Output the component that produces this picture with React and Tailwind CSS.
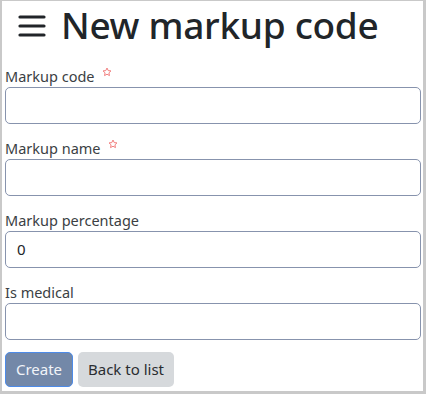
const fields = [
  { label: "Markup code", required: true, value: "" },
  { label: "Markup name", required: true, value: "" },
  { label: "Markup percentage", required: false, value: "0" },
  { label: "Is medical", required: false, value: "" },
];

function Star() {
  return (
    <svg width="10" height="10" viewBox="0 0 24 24" className="ml-[7px] -mt-[10px]">
      <path
        d="M12 2.5l2.9 6.1 6.6.8-4.9 4.6 1.3 6.6L12 17.3l-5.9 3.3 1.3-6.6-4.9-4.6 6.6-.8z"
        fill="none"
        stroke="#f07a7a"
        strokeWidth="2.3"
        strokeLinejoin="round"
      />
    </svg>
  );
}

function App() {
  return (
    <div
      className="w-[426px] h-[394px] bg-white border-[#c9c9c9] border-t-[1px] border-l-[2px] border-r-[3px] border-b-[3px] overflow-hidden text-[#212529]"
      style={{ fontFamily: '"Noto Sans", "Open Sans", sans-serif' }}
    >
      {/* Header */}
      <div className="flex items-center h-[45px] pl-[15px] pt-[2px]">
        <svg width="30" height="24" viewBox="0 0 30 24" className="mr-[14px] mt-[1px]">
          <path d="M3 4h24M3 13h24M3 22h24" stroke="#212529" strokeWidth="3.2" strokeLinecap="round" />
        </svg>
        <h1 className="text-[37px] leading-none font-medium tracking-[-0.3px]">New markup code</h1>
      </div>

      <div className="pl-[3px] pr-[2px] pt-[19px]">
        {fields.map((f, i) => (
          <div key={i} className={i > 0 ? "mt-[13px]" : ""}>
            <label className="flex items-center h-[22px] text-[14.5px] text-[#3b3f44] pt-[1px]">
              {f.label}
              {f.required && <Star />}
            </label>
            <div className="h-[37px] border border-[#8793ad] rounded-[5px] flex items-center px-[11px] text-[15px] text-[#212529]">
              {f.value}
            </div>
          </div>
        ))}

        <div className="flex gap-[5px] mt-[12px]">
          <button className="h-[35px] w-[68px] rounded-[5px] bg-[#7388a8] border border-[#4d8be8] text-[#f1f4f8] text-[15px]">
            Create
          </button>
          <button className="h-[35px] w-[96px] rounded-[5px] bg-[#d6d9dc] text-[#2a2d31] text-[15px]">
            Back to list
          </button>
        </div>
      </div>
    </div>
  );
}

export default App;
